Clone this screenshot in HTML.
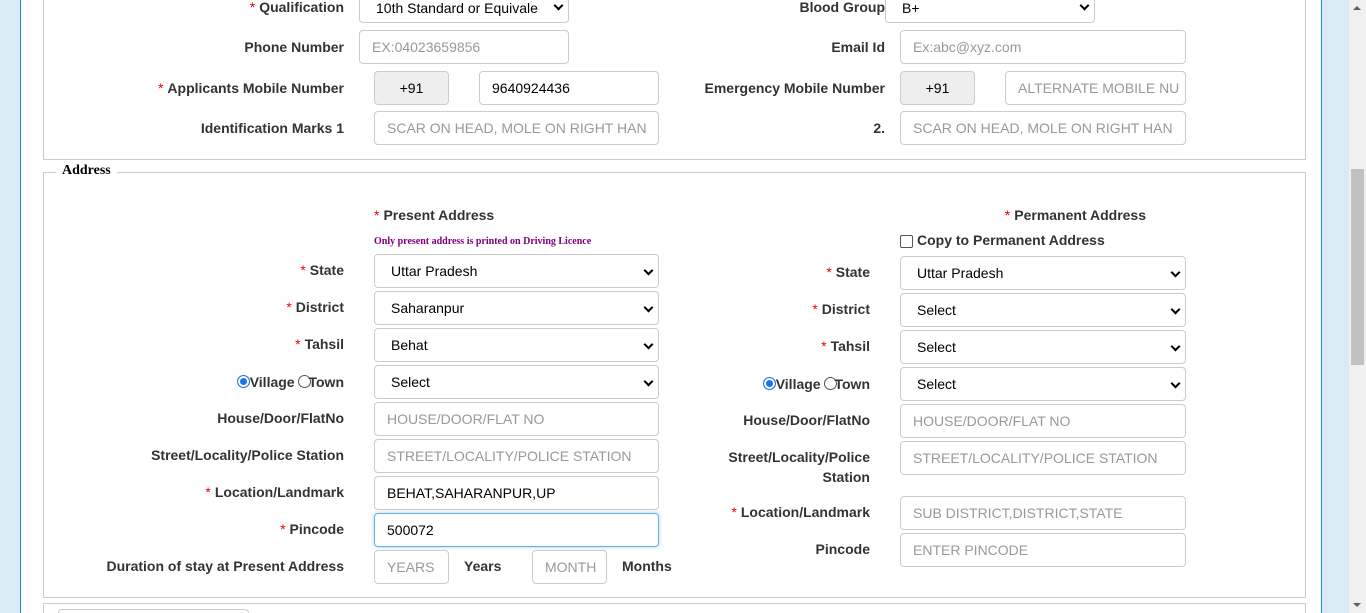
<!DOCTYPE html>
<html><head><meta charset="utf-8"><style>
*{box-sizing:border-box;margin:0;padding:0}
html{width:1366px;height:613px;overflow:hidden}
body{width:1366px;height:613px;overflow:hidden;background:#d9ecf5;font-family:"Liberation Sans",Arial,sans-serif;position:relative}
#wrap{position:absolute;left:20px;top:0;width:1302px;height:613px;background:#fff;border-left:1px solid #1a96d4;border-right:1px solid #1a96d4}
.fs{position:absolute;border:1px solid #ccc}
.l{position:absolute;font-weight:bold;font-size:14px;color:#333;text-align:right;white-space:nowrap;margin-top:-1px}
.l i{font-style:normal;color:#e00;font-weight:normal;margin-right:4px}
.b{position:absolute;border:1px solid #ccc;border-radius:4px;height:34px;font-size:14px;line-height:32px;padding-left:12px;color:#000;background:#fff;white-space:nowrap;overflow:hidden}
.p{color:#999}
.g{background:#eee;text-align:center;padding-left:0}
.s{padding-left:16px}
.s:after{content:"";position:absolute;right:6px;top:12px;width:5px;height:5px;border-right:2px solid #000;border-bottom:2px solid #000;transform:rotate(45deg)}
#sb{position:absolute;left:1349px;top:0;width:17px;height:613px;background:#f0f0f0}
</style></head><body>
<div id="wrap"></div>
<div class="fs" style="left:43px;top:-5px;width:1263px;height:165px"></div>
<div class="fs" style="left:43px;top:172px;width:1263px;height:426px"></div>
<div style="position:absolute;left:56px;top:163px;background:#fff;padding:0 6px;font-family:'Liberation Serif',serif;font-weight:bold;font-size:14px;color:#000">Address</div>
<div class="fs" style="left:43px;top:603px;width:1263px;height:14px"></div>
<div style="position:absolute;left:58px;top:609px;width:191px;height:8px;border:1px solid #ccc;border-radius:4px"></div>

<div class="l" style="right:1022px;top:0px"><i>*</i>Qualification</div>
<div class="b s" style="left:359px;top:-11px;width:210px;line-height:36px">10th Standard or Equivale</div>
<div class="l" style="right:481px;top:0px">Blood Group</div>
<div class="b s" style="left:885px;top:-11px;width:210px;line-height:36px">B+</div>

<div class="l" style="right:1022px;top:40px">Phone Number</div>
<div class="b p" style="left:359px;top:30px;width:210px">EX:04023659856</div>
<div class="l" style="right:481px;top:40px">Email Id</div>
<div class="b p" style="left:900px;top:30px;width:286px">Ex:abc@xyz.com</div>

<div class="l" style="right:1022px;top:81px"><i>*</i>Applicants Mobile Number</div>
<div class="b g" style="left:374px;top:71px;width:75px">+91</div>
<div class="b" style="left:479px;top:71px;width:180px">9640924436</div>
<div class="l" style="right:481px;top:81px">Emergency Mobile Number</div>
<div class="b g" style="left:900px;top:71px;width:75px">+91</div>
<div class="b p" style="left:1005px;top:71px;width:181px">ALTERNATE MOBILE NU</div>

<div class="l" style="right:1022px;top:121px">Identification Marks 1</div>
<div class="b p" style="left:374px;top:111px;width:285px">SCAR ON HEAD, MOLE ON RIGHT HAN</div>
<div class="l" style="right:481px;top:121px">2.</div>
<div class="b p" style="left:900px;top:111px;width:286px">SCAR ON HEAD, MOLE ON RIGHT HAN</div>

<div class="l" style="left:374px;top:208px;text-align:left"><i>*</i>Present Address</div>
<div style="position:absolute;left:374px;top:236px;font-family:'Liberation Serif',serif;font-weight:bold;font-size:10px;color:#800080">Only present address is printed on Driving Licence</div>
<div class="l" style="right:220px;top:208px"><i>*</i>Permanent Address</div>
<div style="position:absolute;left:900px;top:235px;width:13px;height:13px;border:1px solid #555;border-radius:2px"></div>
<div class="l" style="left:917px;top:233px;text-align:left">Copy to Permanent Address</div>

<div class="l" style="right:1022px;top:263px"><i>*</i>State</div>
<div class="b s" style="left:374px;top:254px;width:285px">Uttar Pradesh</div>
<div class="l" style="right:496px;top:265px"><i>*</i>State</div>
<div class="b s" style="left:900px;top:256px;width:286px">Uttar Pradesh</div>

<div class="l" style="right:1022px;top:300px"><i>*</i>District</div>
<div class="b s" style="left:374px;top:291px;width:285px">Saharanpur</div>
<div class="l" style="right:496px;top:302px"><i>*</i>District</div>
<div class="b s" style="left:900px;top:293px;width:286px">Select</div>

<div class="l" style="right:1022px;top:337px"><i>*</i>Tahsil</div>
<div class="b s" style="left:374px;top:328px;width:285px">Behat</div>
<div class="l" style="right:496px;top:339px"><i>*</i>Tahsil</div>
<div class="b s" style="left:900px;top:330px;width:286px">Select</div>

<div class="l" style="right:1022px;top:375px"><span style="display:inline-block;width:13px;height:13px;border-radius:50%;background:#1a73e8;border:1px solid #1a73e8;box-shadow:inset 0 0 0 2px #fff;vertical-align:-1px"></span>Village <span style="display:inline-block;width:13px;height:13px;border-radius:50%;border:1px solid #555;vertical-align:-1px;margin-right:-3px"></span>Town</div>
<div class="b s" style="left:374px;top:365px;width:285px">Select</div>
<div class="l" style="right:496px;top:377px"><span style="display:inline-block;width:13px;height:13px;border-radius:50%;background:#1a73e8;border:1px solid #1a73e8;box-shadow:inset 0 0 0 2px #fff;vertical-align:-1px"></span>Village <span style="display:inline-block;width:13px;height:13px;border-radius:50%;border:1px solid #555;vertical-align:-1px;margin-right:-3px"></span>Town</div>
<div class="b s" style="left:900px;top:367px;width:286px">Select</div>

<div class="l" style="right:1022px;top:411px">House/Door/FlatNo</div>
<div class="b p" style="left:374px;top:402px;width:285px">HOUSE/DOOR/FLAT NO</div>
<div class="l" style="right:496px;top:413px">House/Door/FlatNo</div>
<div class="b p" style="left:900px;top:404px;width:286px">HOUSE/DOOR/FLAT NO</div>

<div class="l" style="right:1022px;top:448px">Street/Locality/Police Station</div>
<div class="b p" style="left:374px;top:439px;width:285px">STREET/LOCALITY/POLICE STATION</div>
<div class="l" style="right:496px;top:448px;line-height:20px">Street/Locality/Police<br>Station</div>
<div class="b p" style="left:900px;top:441px;width:286px">STREET/LOCALITY/POLICE STATION</div>

<div class="l" style="right:1022px;top:485px"><i>*</i>Location/Landmark</div>
<div class="b" style="left:374px;top:476px;width:285px">BEHAT,SAHARANPUR,UP</div>
<div class="l" style="right:496px;top:505px"><i>*</i>Location/Landmark</div>
<div class="b p" style="left:900px;top:496px;width:286px">SUB DISTRICT,DISTRICT,STATE</div>

<div class="l" style="right:1022px;top:522px"><i>*</i>Pincode</div>
<div class="b" style="left:374px;top:513px;width:285px;border-color:#66afe9;box-shadow:0 0 4px rgba(102,175,233,.6)">500072</div>
<div class="l" style="right:496px;top:542px">Pincode</div>
<div class="b p" style="left:900px;top:533px;width:286px">ENTER PINCODE</div>

<div class="l" style="right:1022px;top:559px">Duration of stay at Present Address</div>
<div class="b p" style="left:374px;top:550px;width:75px">YEARS</div>
<div class="l" style="left:464px;top:559px;text-align:left">Years</div>
<div class="b p" style="left:532px;top:550px;width:75px">MONTH</div>
<div class="l" style="left:622px;top:559px;text-align:left">Months</div>

<div id="sb">
<div style="position:absolute;left:2px;top:169px;width:13px;height:196px;background:#c1c1c1"></div>
<div style="position:absolute;left:4px;top:6px;border-left:4px solid transparent;border-right:4px solid transparent;border-bottom:4px solid #606060"></div>
<div style="position:absolute;left:4px;top:603px;border-left:4px solid transparent;border-right:4px solid transparent;border-top:4px solid #606060"></div>
</div>
</body></html>
